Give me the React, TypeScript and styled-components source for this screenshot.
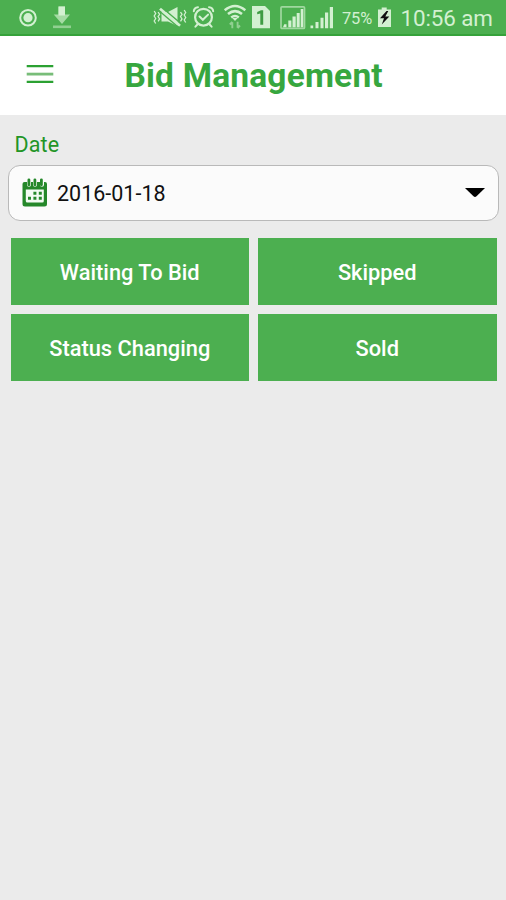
import React from "react";
import styled, { createGlobalStyle } from "styled-components";

const GlobalStyle = createGlobalStyle`
  *, *::before, *::after { box-sizing: border-box; }
  body {
    margin: 0;
    background: #ebebeb;
    font-family: Roboto, "Liberation Sans", sans-serif;
  }
`;

const Screen = styled.div`
  display: flex;
  flex-direction: column;
  height: 900px;
  overflow: hidden;
  background: #ebebeb;
`;

const StatusBar = styled.div`
  display: flex;
  align-items: center;
  height: 36px;
  background: #4caf50;
  border-bottom: 2px solid #35a23a;
  color: #d3f0d1;
  white-space: nowrap;
`;

const StatusIcon = styled.svg<{ $gap: number }>`
  flex: none;
  height: 34px;
  margin-left: ${({ $gap }) => $gap}px;
`;

const Battery = styled.span`
  width: 31px;
  margin-left: 8px;
  padding-top: 3px;
  font-size: 16.4px;
  line-height: 32px;
  letter-spacing: -0.1px;
`;

const Clock = styled.span`
  margin-left: 9px;
  padding-top: 2px;
  font-size: 22.4px;
  line-height: 32px;
  letter-spacing: -0.1px;
`;

const Header = styled.header`
  display: flex;
  align-items: center;
  height: 78.5px;
  padding-left: 26px;
  background: #fff;
`;

const MenuButton = styled.button`
  display: flex;
  width: 28px;
  height: 28px;
  padding: 0;
  border: 0;
  background: none;
`;

const Title = styled.h1`
  margin: 2px 0 0 70.5px;
  color: #37a73f;
  font-size: 33.5px;
  font-weight: 700;
  line-height: 40px;
  letter-spacing: 0.18px;
  white-space: nowrap;
`;

const Content = styled.main`
  display: flex;
  flex-direction: column;
  padding: 16px 7px 0 8px;
`;

const Label = styled.label`
  padding-left: 6.5px;
  color: #229526;
  font-size: 21.5px;
  line-height: 28px;
  letter-spacing: 0.1px;
`;

const DateField = styled.div`
  display: flex;
  align-items: center;
  height: 56px;
  margin-top: 6.5px;
  padding: 0 13px 0 13px;
  border: 1.5px solid #b9b9b9;
  border-radius: 12px;
  background: #fbfbfb;
`;

const DateValue = styled.span`
  flex: 1;
  margin-left: 9px;
  padding-top: 2px;
  color: #111;
  font-size: 21.5px;
  line-height: 28px;
`;

const Actions = styled.div`
  display: grid;
  grid-template-columns: 1fr 1fr;
  grid-auto-rows: 67px;
  gap: 9px;
  margin-top: 17.4px;
  padding: 0 2.5px 0 2.5px;
`;

const ActionButton = styled.button`
  padding: 2px 0 0;
  border: 0;
  background: #4caf50;
  color: #fff;
  font-family: inherit;
  font-size: 21.8px;
  font-weight: 500;
  letter-spacing: 0.02px;
`;

const PALE = "#d3f0d1";
const DIM = "#91d091";

const actions = ["Waiting To Bid", "Skipped", "Status Changing", "Sold"];

function StatusIcons() {
  return (
    <>
      <StatusIcon $gap={19} width="18" viewBox="0 0 18 34">
        <circle cx="9" cy="17.7" r="7.8" fill="none" stroke={PALE} strokeWidth="2" />
        <circle cx="9" cy="17.7" r="4.6" fill={PALE} />
      </StatusIcon>
      <StatusIcon $gap={16} width="18" viewBox="0 0 18 34">
        <path d="M5.5 6.5h6.5v8H17L9 24 .7 14.5h4.8z" fill="#a5dba4" />
        <path d="M5.5 6.5h6.5v9H5.5z" fill={PALE} />
        <path d="M0 25.5h18v2.6H0z" fill={DIM} />
      </StatusIcon>
      <StatusIcon $gap={81.5} width="34" viewBox="0 0 34 34" fill="none" stroke={PALE}>
        <path d="M1.2 11l1.5 2.5-1.5 2.5 1.5 2.5-1.5 2.5 1.5 2.5M5.1 12l1.5 2.3-1.5 2.3 1.5 2.3-1.5 2.4M27.5 12l1.5 2.3-1.5 2.3 1.5 2.3-1.5 2.4M31.2 10l1.5 2.5-1.5 2.5 1.5 2.5-1.5 2.5 1.5 2.5" strokeWidth="1.3" />
        <path d="M8.5 12h6.500L24.500 7v19l-9.500-4.500H8.500z" fill={PALE} stroke="none" />
        <path d="M9 7.600L28.500 24" stroke="#4caf50" strokeWidth="1.400" />
        <path d="M7 8.800L27 25.800" strokeWidth="2.800" />
        <path d="M6 10.800L26 27.800" stroke="#4caf50" strokeWidth="1.300" />
      </StatusIcon>
      <StatusIcon $gap={5} width="23" viewBox="0 0 23 34" fill="none" stroke={PALE} strokeLinecap="round">
        <circle cx="11.5" cy="17.2" r="8.4" strokeWidth="2.2" />
        <path d="M7.5 16.5l3.3 3.3 5.3-5.2" strokeWidth="2" />
        <path d="M1.8 11.3Q2 7.6 6 7.2M21.2 11.3Q21 7.6 17 7.2M5.4 24.5l-2 2.2M17.6 24.5l2 2.2" strokeWidth="2" />
      </StatusIcon>
      <StatusIcon $gap={8.5} width="24" viewBox="0 0 24 34" fill="none" stroke={PALE} strokeWidth="2.5">
        <path d="M1.7 10.2Q12 1.8 22.3 10.2M5 14Q12 8.2 19 14M8.2 17.4Q12 14.5 15.8 17.4" />
        <path d="M9.3 18h5.4L12 21z" fill={PALE} stroke="none" />
        <path d="M9.3 28.3v-6M6.8 24.5l2.5-2.6M14.6 21.8v6M17 25.5l-2.4 2.6" stroke={DIM} strokeWidth="1.9" />
      </StatusIcon>
      <StatusIcon $gap={4.5} width="18" viewBox="0 0 18 34">
        <path d="M0 6h13l5 5v17.3H0z" fill={PALE} />
        <path d="M5.2 14.3V12l3.8-1.8h2.2v14.6H8.3V13.4z" fill="#3f9c43" />
      </StatusIcon>
      <StatusIcon $gap={10} width="26" viewBox="0 0 26 34">
        <rect x="1" y="6.8" width="23.5" height="21.6" rx="1" fill="none" stroke="#a0d8a0" strokeWidth="1.7" />
        <path d="M4.2 24.2h2.3v3H3zM8.3 20.5h3.1v6.7H8.3zM12.5 16.5h3.2v10.7h-3.2zM16.7 13h3v14.2h-3zM20.7 9h2.6v18.2h-2.6z" fill={PALE} />
      </StatusIcon>
      <StatusIcon $gap={4.5} width="24" viewBox="0 0 24 34">
        <path d="M.5 25.5h2.7v2.7H.5zM5.5 22h3v6.2h-3zM10.5 17.7h3v10.5h-3zM15 12.5h3.2v15.7H15zM19.8 7h3.2v21.2h-3.2z" fill={PALE} />
      </StatusIcon>
    </>
  );
}

function CalendarIcon() {
  return (
    <svg width="26" height="30" viewBox="0 0 26 30">
      <path d="M3 4h2v2.8a2 2 0 004 0V4h2v2.8a2 2 0 004 0V4h3v2.8a2 2 0 004 0V4h1a2 2 0 012 2v20a2.5 2.5 0 01-2.5 2.5H3A2.5 2.5 0 01.5 26V6a2 2 0 012-2z" fill="#25882a" />
      <path d="M3.8 11.5h18V23q0 1.5-1.5 1.5h-15Q3.800 24.500 3.800 23z" fill="#f3fbf3" />
      <path d="M6.9 1.8v5M12.9 1.8v5M19.4 1.8v5" stroke="#25882a" strokeWidth="2.8" strokeLinecap="round" />
      <path d="M11.4 13.7h3v3h-3zM16.8 13.7h3v3h-3zM6 18.7h3v3H6zM11.4 18.7h3v3h-3zM16.8 18.7h3v3h-3z" fill="#25882a" />
    </svg>
  );
}

export default function App() {
  return (
    <Screen>
      <GlobalStyle />
      <StatusBar>
        <StatusIcons />
        <Battery>75%</Battery>
        <StatusIcon $gap={3.5} width="15" viewBox="0 0 15 34">
          <path d="M1 9.5h3.7V7.5h5v2H14V27H1z" fill={PALE} />
          <path d="M9.5 11L3 18.3h4L4.8 24.5l7.5-8H8.3l3-5.5z" fill="#111" />
        </StatusIcon>
        <Clock>10:56 am</Clock>
      </StatusBar>
      <Header>
        <MenuButton aria-label="Menu">
          <svg width="28" height="28" viewBox="0 0 28 28">
            <path d="M.7 5.2h26.6M.7 20.9h26.6" stroke="#2ba132" strokeWidth="2.3" />
            <path d="M.7 13.1h26.6" stroke="#78bd79" strokeWidth="2.8" />
          </svg>
        </MenuButton>
        <Title>Bid Management</Title>
      </Header>
      <Content>
        <Label>Date</Label>
        <DateField>
          <CalendarIcon />
          <DateValue>2016-01-18</DateValue>
          <svg width="20" height="10" viewBox="0 0 20 10">
            <path d="M0 0h20l-8.5 8.3q-1.5 1.2-3 0z" fill="#000" />
          </svg>
        </DateField>
        <Actions>
          {actions.map((label) => (
            <ActionButton key={label}>{label}</ActionButton>
          ))}
        </Actions>
      </Content>
    </Screen>
  );
}
